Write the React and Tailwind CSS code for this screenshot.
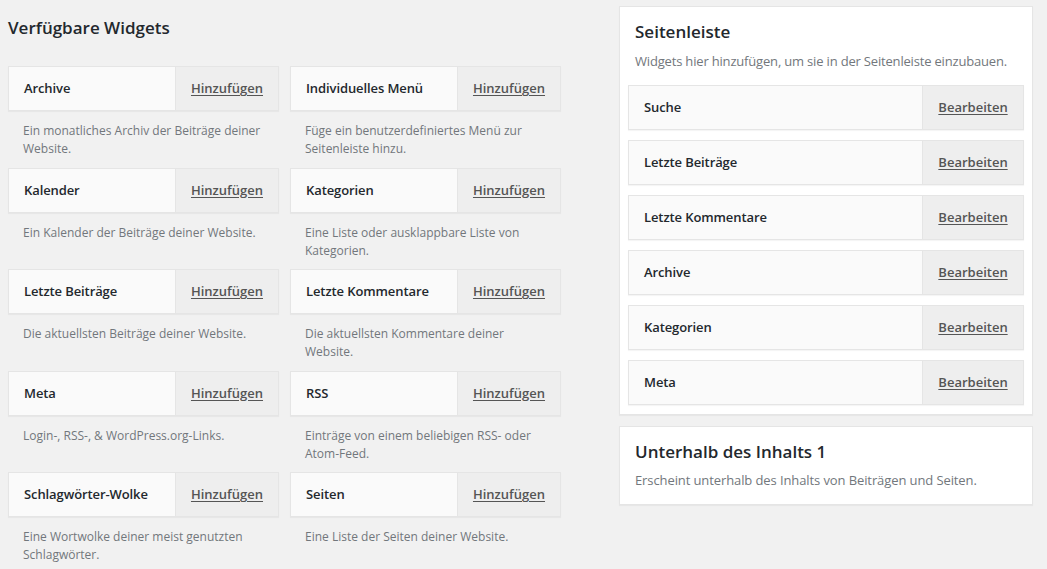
const available = [
  { name: 'Archive', desc: 'Ein monatliches Archiv der Beiträge deiner Website.' },
  { name: 'Individuelles Menü', desc: 'Füge ein benutzerdefiniertes Menü zur Seitenleiste hinzu.' },
  { name: 'Kalender', desc: 'Ein Kalender der Beiträge deiner Website.' },
  { name: 'Kategorien', desc: 'Eine Liste oder ausklappbare Liste von Kategorien.' },
  { name: 'Letzte Beiträge', desc: 'Die aktuellsten Beiträge deiner Website.' },
  { name: 'Letzte Kommentare', desc: 'Die aktuellsten Kommentare deiner Website.' },
  { name: 'Meta', desc: 'Login-, RSS-, & WordPress.org-Links.' },
  { name: 'RSS', desc: 'Einträge von einem beliebigen RSS- oder Atom-Feed.' },
  { name: 'Schlagwörter-Wolke', desc: 'Eine Wortwolke deiner meist genutzten Schlagwörter.' },
  { name: 'Seiten', desc: 'Eine Liste der Seiten deiner Website.' },
];

const sidebar = ['Suche', 'Letzte Beiträge', 'Letzte Kommentare', 'Archive', 'Kategorien', 'Meta'];

function WidgetBar({ name, action, btnWidth }) {
  return (
    <div className="flex h-[45px] border border-[#e5e5e5] bg-[#fafafa] shadow-[0_1px_1px_rgba(0,0,0,0.04)]">
      <div className="flex-1 flex items-center pl-[15px] pt-[1px] text-[13px] font-semibold text-[#23282d] tracking-[-0.1px]">
        {name}
      </div>
      <div className={`${btnWidth} flex items-center justify-center pt-[1px] border-l border-[#e5e5e5] bg-[#eeeeee]`}>
        <span className="text-[13px] font-semibold text-[#555] underline underline-offset-2">{action}</span>
      </div>
    </div>
  );
}

export default function App() {
  return (
    <div className="w-[1047px] h-[569px] overflow-hidden bg-[#f1f1f1] font-['Open_Sans',sans-serif] flex">
      {/* Verfügbare Widgets */}
      <div className="w-[553px] ml-[8px]">
        <h2 className="h-[66px] pt-[16px] text-[17px] font-semibold text-[#23282d] leading-[24px]">
          Verfügbare Widgets
        </h2>
        <div className="grid grid-cols-2 gap-x-[11px]">
          {available.map((w) => (
            <div key={w.name} className="h-[101.5px]">
              <WidgetBar name={w.name} action="Hinzufügen" btnWidth="w-[103px]" />
              <p className="pt-[11px] px-[15px] text-[12px] leading-[18px] text-[#72777c]">{w.desc}</p>
            </div>
          ))}
        </div>
      </div>

      {/* Seitenleisten */}
      <div className="w-[414px] ml-[58px] pt-[6px] flex flex-col gap-[11px]">
        <div className="bg-white border border-[#e5e5e5] shadow-[0_1px_1px_rgba(0,0,0,0.04)] px-[8px] pb-[9px]">
          <h3 className="pl-[7px] pt-[13px] text-[17px] font-semibold text-[#23282d] leading-[24px]">Seitenleiste</h3>
          <p className="pl-[7px] pt-[8px] pb-[15px] text-[13px] leading-[18px] tracking-[-0.18px] text-[#72777c]">
            Widgets hier hinzufügen, um sie in der Seitenleiste einzubauen.
          </p>
          <div className="flex flex-col gap-[10px]">
            {sidebar.map((s) => (
              <WidgetBar key={s} name={s} action="Bearbeiten" btnWidth="w-[101px]" />
            ))}
          </div>
        </div>
        <div className="bg-white border border-[#e5e5e5] shadow-[0_1px_1px_rgba(0,0,0,0.04)] px-[15px] h-[79px]">
          <h3 className="pt-[13px] text-[17px] font-semibold text-[#23282d] leading-[24px]">Unterhalb des Inhalts 1</h3>
          <p className="pt-[7px] text-[13px] leading-[18px] tracking-[-0.1px] text-[#72777c]">
            Erscheint unterhalb des Inhalts von Beiträgen und Seiten.
          </p>
        </div>
      </div>
    </div>
  );
}
